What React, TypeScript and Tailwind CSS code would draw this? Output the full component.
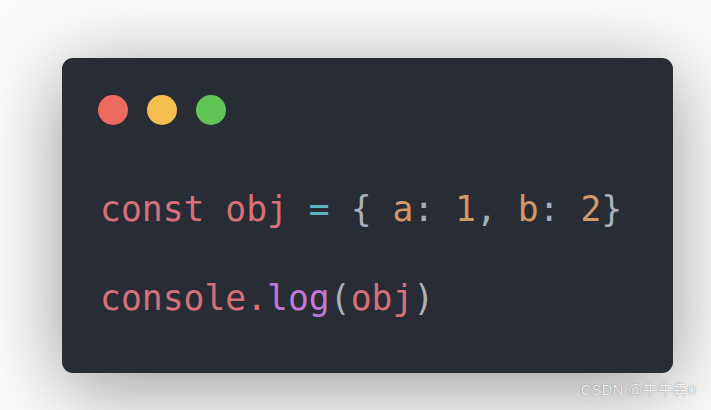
export default function App() {
  const dots = ['bg-[#ee6a5f]', 'bg-[#f6be4f]', 'bg-[#61c454]'];

  return (
    <div className="relative w-[711px] h-[410px] overflow-hidden bg-[#fbfbfb] pt-[58px] pl-[62px]">
      <div className="w-[611px] h-[315px] rounded-[11px] bg-[#282c34] shadow-[0_14px_80px_rgba(0,0,0,0.4)] pt-[37px] pl-[36px]">
        <div className="flex gap-[19px]">
          {dots.map((c) => (
            <span key={c} className={`w-[30px] h-[30px] rounded-full ${c}`} />
          ))}
        </div>

        <div
          className="mt-[64px] ml-[2px] flex flex-col gap-[49px] text-[34.7px] leading-[40px] whitespace-pre"
          style={{ fontFamily: '"DejaVu Sans Mono", monospace' }}
        >
          <div>
            <span className="text-[#d7707a]">const obj </span>
            <span className="text-[#5bb3bf]">=</span>
            <span className="text-[#a9b0bc]"> {'{'} </span>
            <span className="text-[#d09a68]">a</span>
            <span className="text-[#a9b0bc]">: </span>
            <span className="text-[#d09a68]">1</span>
            <span className="text-[#a9b0bc]">, </span>
            <span className="text-[#d09a68]">b</span>
            <span className="text-[#a9b0bc]">: </span>
            <span className="text-[#d09a68]">2</span>
            <span className="text-[#a9b0bc]">{'}'}</span>
          </div>
          <div>
            <span className="text-[#d7707a]">console.</span>
            <span className="text-[#c07ad6]">log</span>
            <span className="text-[#a9b0bc]">(</span>
            <span className="text-[#d7707a]">obj</span>
            <span className="text-[#a9b0bc]">)</span>
          </div>
        </div>
      </div>

      {/* watermark */}
      <div
        className="absolute right-[15px] bottom-[12px] text-[15px] leading-[17px] text-[#f2f2f2] [text-shadow:0_0_1px_rgba(0,0,0,0.55)]"
        style={{ fontFamily: '"Liberation Sans", "Noto Sans CJK SC", sans-serif' }}
      >
        CSDN @牛牛犇0
      </div>
    </div>
  );
}
